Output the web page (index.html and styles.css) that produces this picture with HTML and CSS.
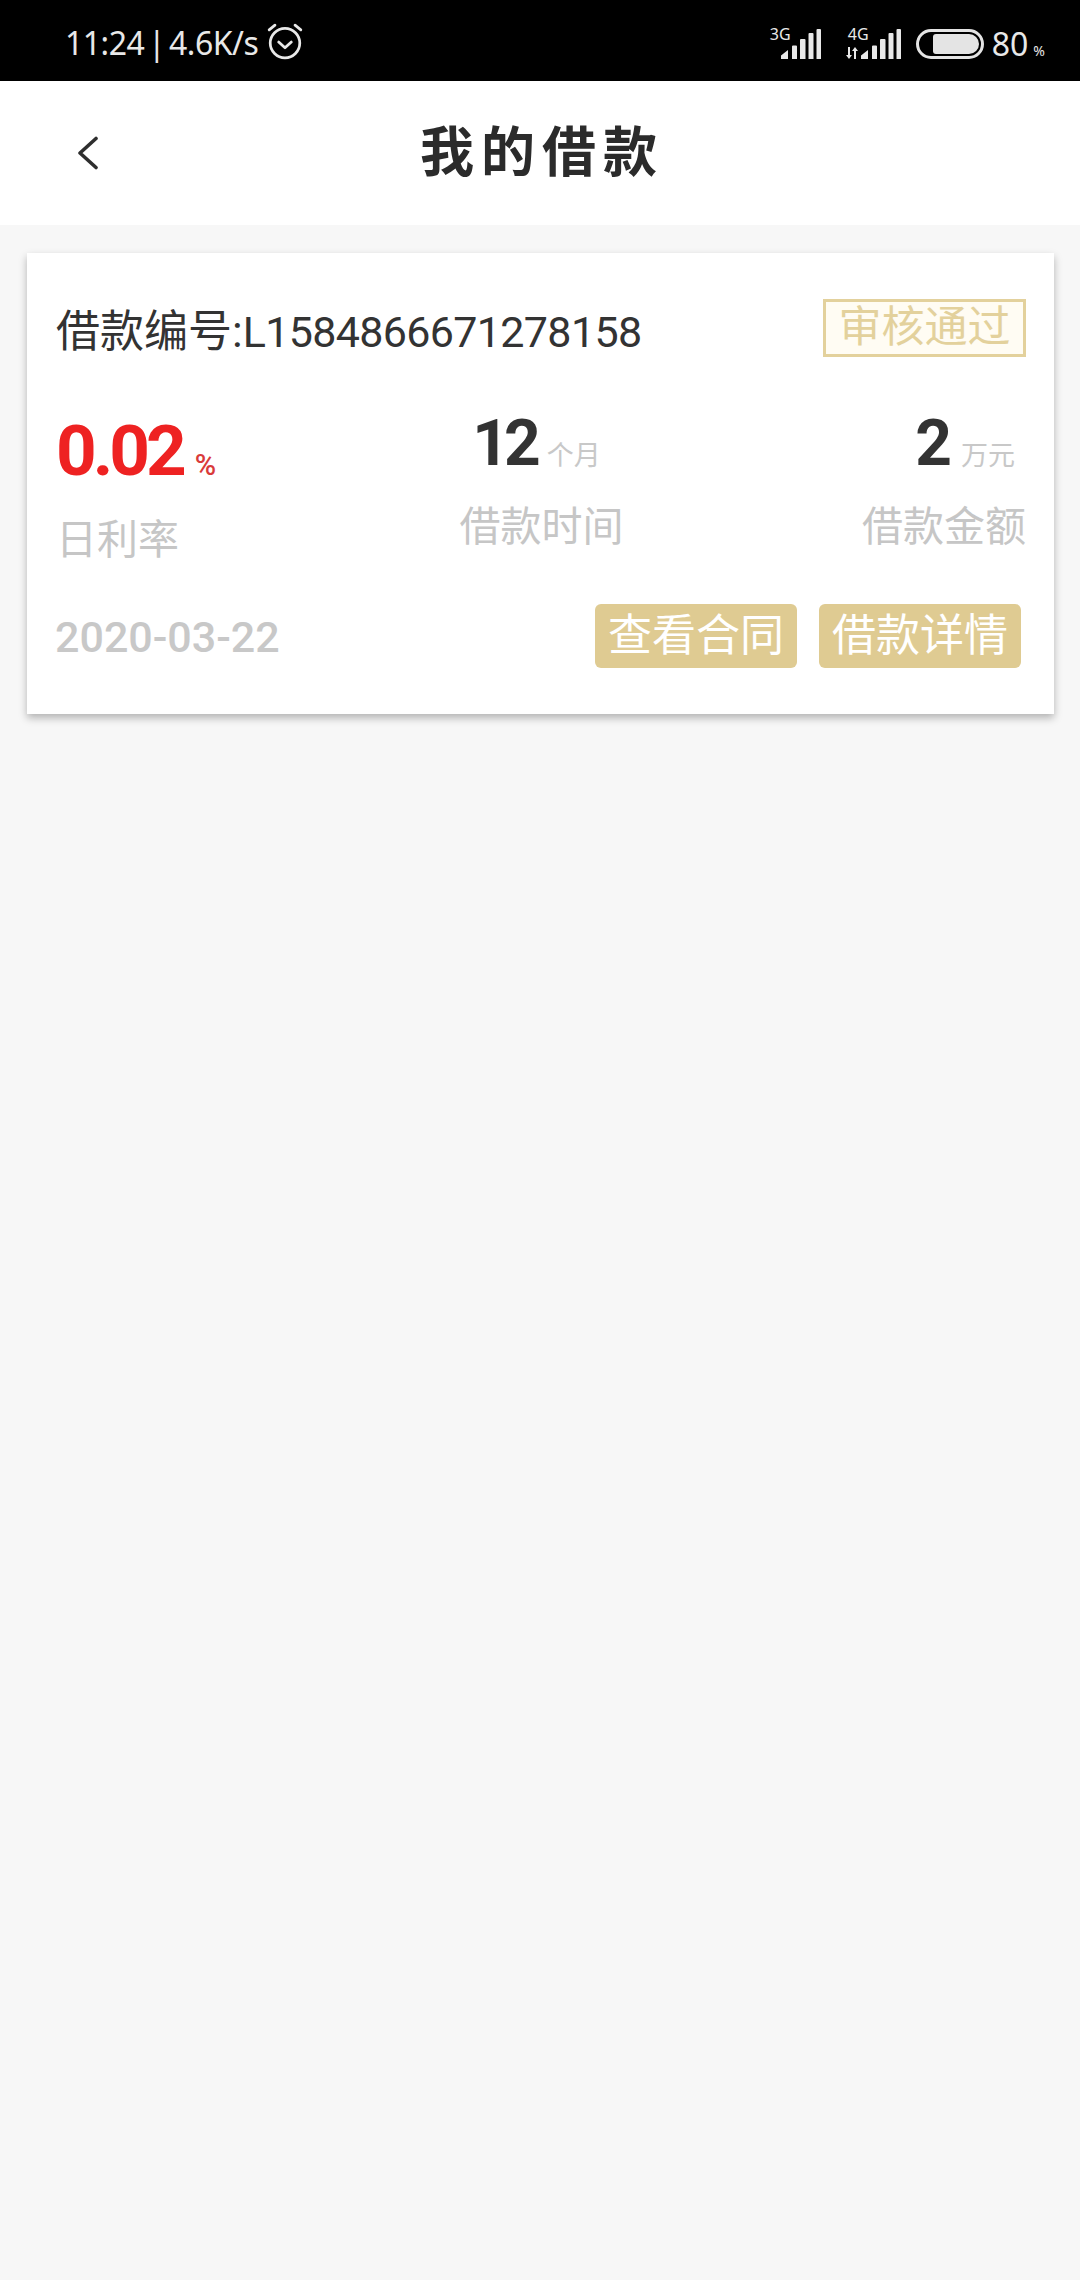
FILE: index.html
```html
<!DOCTYPE html>
<html lang="zh-CN">
<head>
<meta charset="utf-8">
<title>我的借款</title>
<link rel="stylesheet" href="styles.css">
</head>
<body>
<div class="statusbar">
  <div class="status-left">
    <span class="status-text">11:24 | 4.6K/s</span>
    <svg class="alarm" width="38" height="38" viewBox="0 0 36 36" fill="none" stroke="#e8e8e8" stroke-width="2.6" stroke-linecap="round" stroke-linejoin="round"><circle cx="18" cy="20" r="14"/><path d="M12 19l6 5.5 6-5.5"/><path d="M3 7.500L8.500 3M33 7.500L27.500 3"/></svg>
  </div>
  <div class="status-right">
    <div class="net net-3g">
      <span class="net-label">3G</span>
      <svg class="bars" width="40" height="30" viewBox="0 0 40 30" fill="#e8e8e8"><path d="M0 30V26.500L7 21V30zM11 30V17.500a1 1 0 0 1 1-1H15a1 1 0 0 1 1 1V30zM19 30V11a1 1 0 0 1 1-1H23.500a1 1 0 0 1 1 1V30zM27.500 30V5a1 1 0 0 1 1-1H31.500a1 1 0 0 1 1 1V30zM35.500 30V1a1 1 0 0 1 1-1H39a1 1 0 0 1 1 1V30z"/></svg>
    </div>
    <div class="net net-4g">
      <span class="net-label">4G</span>
      <svg class="arrows" width="12" height="12" viewBox="0 0 12 12" fill="#e8e8e8"><path d="M2 0H4V8H6L3 12 0 8H2zM8 12H10V4H12L9 0 6 4H8z"/></svg>
      <svg class="bars" width="40" height="30" viewBox="0 0 40 30" fill="#e8e8e8"><path d="M0 30V26.500L7 21V30zM11 30V17.500a1 1 0 0 1 1-1H15a1 1 0 0 1 1 1V30zM19 30V11a1 1 0 0 1 1-1H23.500a1 1 0 0 1 1 1V30zM27.500 30V5a1 1 0 0 1 1-1H31.500a1 1 0 0 1 1 1V30zM35.500 30V1a1 1 0 0 1 1-1H39a1 1 0 0 1 1 1V30z"/></svg>
    </div>
    <div class="battery"><div class="battery-fill"></div></div>
    <span class="batt-num">80</span><span class="batt-pct">%</span>
  </div>
</div>

<header class="navbar">
  <svg class="back" width="22" height="34" viewBox="0 0 22 34" fill="none" stroke="#2e2e2e" stroke-width="3.600" stroke-linecap="round" stroke-linejoin="round"><path d="M19 2.500L3 17l16 14.500"/></svg>
  <h1 class="title">我的借款</h1>
</header>

<main class="content">
  <section class="card">
    <div class="row-head">
      <div class="loan-no">借款编号:<span class="loan-id">L1584866671278158</span></div>
      <div class="badge">审核通过</div>
    </div>
    <div class="row-stats">
      <div class="stat stat-rate">
        <div class="value"><span class="num num-red">0.02</span><span class="unit unit-red">%</span></div>
        <div class="label">日利率</div>
      </div>
      <div class="stat stat-term">
        <div class="value"><span class="num num-narrow">12</span><span class="unit">个月</span></div>
        <div class="label">借款时间</div>
      </div>
      <div class="stat stat-amount">
        <div class="value"><span class="num">2</span><span class="unit">万元</span></div>
        <div class="label">借款金额</div>
      </div>
    </div>
    <div class="row-foot">
      <div class="date">2020-03-22</div>
      <div class="actions">
        <button class="btn">查看合同</button>
        <button class="btn">借款详情</button>
      </div>
    </div>
  </section>
</main>
</body>
</html>
```

FILE: styles.css
```css
* { box-sizing: border-box; }
html, body { margin: 0; padding: 0; }
body {
  width: 1080px;
  height: 2280px;
  background: #f7f7f7;
  font-family: Roboto, "Noto Sans CJK SC", sans-serif;
  overflow: hidden;
}
.statusbar {
  height: 81px;
  background: #000;
  display: flex;
  justify-content: space-between;
  align-items: center;
  padding: 0 35px 0 65px;
  color: #e8e8e8;
}
.status-left { display: flex; align-items: center; gap: 8px; padding-top: 5px; }
.status-text { font-family: "Noto Sans", sans-serif; font-size: 32px; font-weight: 400; line-height: 40px; word-spacing: -4px; letter-spacing: -0.500px; }
.alarm { margin-top: -5px; }
.status-right { display: flex; align-items: flex-end; height: 40px; position: relative; top: -1px; }
.net { position: relative; width: 52px; height: 30px; top: -1px; }
.net-3g { margin-right: 25px; margin-left: 1px; }
.net-4g { margin-right: 15px; width: 55px; }
.net-label {
  position: absolute;
  top: -3px;
  font-family: "Noto Sans", sans-serif;
  font-size: 16px;
  line-height: 16px;
}
.net-3g .net-label { left: 1px; }
.net-4g .net-label { left: 2px; }
.bars { position: absolute; right: 0; bottom: 0; }
.net-3g .bars { right: 0; }
.arrows { position: absolute; left: 0; bottom: 0; }
.battery {
  width: 68px;
  height: 30px;
  position: relative;
  top: -1px;
  border: 3px solid #e4e4e4;
  border-radius: 15px;
  padding: 2px 2px 2px 14px;
}
.battery-fill { height: 100%; background: #e4e4e4; border-radius: 3px 10px 10px 3px; }
.batt-num { font-family: "Noto Sans", sans-serif; font-size: 32px; line-height: 32px; margin-left: 8px; }
.batt-pct { font-family: "Noto Sans", sans-serif; font-size: 14px; line-height: 18px; margin-left: 5px; }

.navbar {
  height: 144px;
  background: #fff;
  display: flex;
  align-items: center;
  justify-content: center;
  position: relative;
}
.back { position: absolute; left: 77px; top: 55px; }
.title {
  margin: 2px 0 0 4px;
  font-size: 54px;
  font-weight: 700;
  letter-spacing: 7px;
  color: #2b2b2b;
  line-height: 64px;
}
.content { padding: 28px 26px 0 27px; }
.card {
  height: 461px;
  background: #fff;
  padding: 46px 28px 0 29px;
  box-shadow: 0 4px 8px rgba(0, 0, 0, 0.28);
}
.row-head { display: flex; justify-content: space-between; align-items: flex-start; height: 58px; }
.loan-no { font-size: 44px; line-height: 58px; color: #333; padding-top: 4px; }
.loan-id { font-size: 43px; letter-spacing: -0.650px; }
.badge {
  width: 203px;
  height: 58px;
  border: 3px solid #e3d19c;
  background: #fffcf3;
  color: #e3d19c;
  font-size: 43px;
  line-height: 50px;
  text-align: center;
}
.row-stats { display: flex; justify-content: space-between; margin-top: 52px; height: 195px; }
.stat { display: flex; flex-direction: column; }
.stat-term { align-items: center; margin-left: 5px; }
.stat-amount { align-items: flex-end; }
.stat-rate { padding-top: 7px; }
.value { display: flex; align-items: baseline; line-height: 70px; height: 70px; }
.stat-term .value { padding-right: 10px; }
.num { font-size: 64px; font-weight: 700; color: #333; }
.num-narrow { letter-spacing: -5px; margin-right: -1px; }
.num-red { font-size: 71px; color: #ee2222; letter-spacing: -4px; }
.unit { font-size: 27px; color: #c8c8c8; margin-left: 12px; }
.stat-amount .value { padding-right: 11px; }
.stat-amount .unit { font-size: 27px; margin-left: 9px; }
.unit-red { color: #d93a3a; margin-left: 12px; font-size: 29px; font-weight: 500; }
.label { font-size: 41px; line-height: 56px; color: #c6c6c6; margin-top: 20px; }
.stat-rate .label { margin-top: 26px; }
.row-foot { display: flex; justify-content: space-between; align-items: center; }
.date { font-size: 43px; font-weight: 500; color: #c8c8c8; padding-top: 2px; margin-left: -1px; }
.actions { display: flex; gap: 22px; padding-right: 5px; }
.btn {
  width: 202px;
  height: 64px;
  padding: 0;
  border: 0;
  border-radius: 6px;
  background: #dfcb92;
  color: #fff;
  font-family: inherit;
  font-size: 44px;
  line-height: 64px;
}
```
